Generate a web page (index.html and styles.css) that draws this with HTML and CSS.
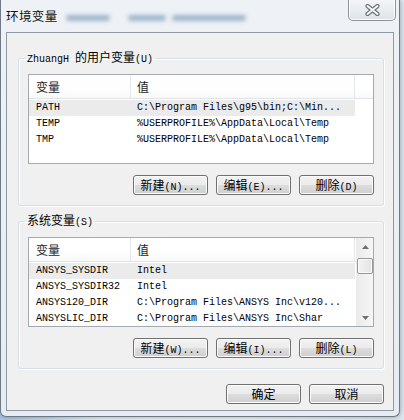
FILE: index.html
```html
<!DOCTYPE html>
<html lang="zh-CN">
<head>
  <meta charset="UTF-8">
  <title>环境变量</title>
  <link rel="stylesheet" href="styles.css">
</head>
<body>
  <div class="window">
    <!-- title bar -->
    <div class="titlebar">
      <div class="title">环境变量</div>
      <div class="title-blur"><i class="b1"></i><i class="b2"></i><i class="b3"></i></div>
      <div class="close">
        <svg width="15" height="12" viewBox="0 0 15 12">
          <path d="M2.5 2 L12.5 10 M12.5 2 L2.5 10" stroke="#6a7079" stroke-width="4.2" stroke-linecap="round"/>
          <path d="M2.5 2 L12.5 10 M12.5 2 L2.5 10" stroke="#f6f7f8" stroke-width="2" stroke-linecap="round"/>
        </svg>
      </div>
    </div>

    <div class="client">
      <!-- user variables -->
      <fieldset class="group">
        <legend><span class="lat">ZhuangH </span>的用户变量<span class="lat">(U)</span></legend>
        <div class="list">
          <div class="list-main">
            <div class="list-head"><div class="c1">变量</div><div class="c2">值</div></div>
            <div class="rows">
              <div class="row sel"><div class="c1">PATH</div><div class="c2">C:\Program Files\g95\bin;C:\Min...</div></div>
              <div class="row"><div class="c1">TEMP</div><div class="c2">%USERPROFILE%\AppData\Local\Temp</div></div>
              <div class="row"><div class="c1">TMP</div><div class="c2">%USERPROFILE%\AppData\Local\Temp</div></div>
            </div>
          </div>
        </div>
        <div class="btn-row">
          <button class="btn">新建<span class="lat">(N)...</span></button>
          <button class="btn">编辑<span class="lat">(E)...</span></button>
          <button class="btn">删除<span class="lat">(D)</span></button>
        </div>
      </fieldset>

      <!-- system variables -->
      <fieldset class="group group-sys">
        <legend>系统变量<span class="lat">(S)</span></legend>
        <div class="list">
          <div class="list-main">
            <div class="list-head"><div class="c1">变量</div><div class="c2">值</div></div>
            <div class="rows">
              <div class="row sel"><div class="c1">ANSYS_SYSDIR</div><div class="c2">Intel</div></div>
              <div class="row"><div class="c1">ANSYS_SYSDIR32</div><div class="c2">Intel</div></div>
              <div class="row"><div class="c1">ANSYS120_DIR</div><div class="c2">C:\Program Files\ANSYS Inc\v120...</div></div>
              <div class="row"><div class="c1">ANSYSLIC_DIR</div><div class="c2">C:\Program Files\ANSYS Inc\Shar</div></div>
            </div>
          </div>
          <div class="scroll">
            <div class="sb-btn">
              <svg width="7" height="4" viewBox="0 0 7 4"><path d="M0 4 L3.5 0 L7 4 Z" fill="#6f6f6f"/></svg>
            </div>
            <div class="sb-thumb"></div>
            <div class="sb-track"></div>
            <div class="sb-btn">
              <svg width="7" height="4" viewBox="0 0 7 4"><path d="M0 0 L3.5 4 L7 0 Z" fill="#6f6f6f"/></svg>
            </div>
          </div>
        </div>
        <div class="btn-row">
          <button class="btn">新建<span class="lat">(W)...</span></button>
          <button class="btn">编辑<span class="lat">(I)...</span></button>
          <button class="btn">删除<span class="lat">(L)</span></button>
        </div>
      </fieldset>

      <div class="btn-row dlg-row">
        <button class="btn">确定</button>
        <button class="btn">取消</button>
      </div>
    </div>
  </div>
</body>
</html>
```

FILE: styles.css
```css
* {
  box-sizing: border-box;
}
body {
  margin: 0;
  width: 404px;
  height: 420px;
  overflow: hidden;
  background: linear-gradient(90deg, #a9c8e6 0%, #e9f0f6 25%, #f1f4f7 60%, #dde6ee 100%);
  font-family: "Noto Sans CJK SC", sans-serif;
  font-size: 12px;
  color: #000;
}
.window {
  width: 400px;
  height: 417px;
  background: linear-gradient(#eef2f6, #e6ecf1);
  border: 1px solid #6f7984;
  border-top: none;
  border-radius: 0 0 6px 6px;
  padding: 0 5px 5px;
  box-shadow: 0 0 5px rgba(0, 0, 0, 0.35);
  display: flex;
  flex-direction: column;
}
.titlebar {
  height: 32px;
  flex-shrink: 0;
  display: flex;
  align-items: flex-start;
}
.title {
  padding-top: 7px;
  line-height: 18px;
  font-size: 12.5px;
  letter-spacing: 0.4px;
  color: #111;
}
.title-blur {
  display: flex;
  padding-top: 15px;
  margin-left: 8px;
}
.title-blur i {
  display: block;
  height: 6px;
  border-radius: 3px;
  background: #9fb4c9;
  filter: blur(2px);
}
.title-blur .b1 { width: 44px; }
.title-blur .b2 { width: 38px; margin-left: 18px; }
.title-blur .b3 { width: 74px; margin-left: 6px; }
.close {
  margin-left: auto;
  margin-right: -2px;
  margin-top: -1px;
  width: 48px;
  height: 22px;
  border: 1px solid #8e959d;
  border-top: none;
  border-radius: 0 0 5px 5px;
  background: linear-gradient(#f4f6f8, #dfe3e8);
  box-shadow: inset 0 0 0 1px rgba(255, 255, 255, 0.8);
  display: flex;
  align-items: center;
  justify-content: center;
}

.client {
  flex: 1;
  border: 1px solid #8e99a4;
  background: #f0f0f0;
  padding: 17px 9px 0 11px;
}

/* group boxes */
.group {
  margin: 0;
  padding: 0 9px 10px 9px;
  border: 1px solid #d5dfe5;
  border-radius: 3px;
  box-shadow: inset 1px 1px 0 #fff, 1px 1px 0 #fff;
}
.group-sys {
  margin-top: 7px;
}
.group legend {
  padding: 0 2px;
  margin-left: -3px;
  line-height: 14px;
  color: #000;
}
.lat {
  font-family: "Liberation Mono", monospace;
  font-size: 10px;
}

/* list views */
.list {
  margin-top: 7px;
  height: 90px;
  border: 1px solid #a4aab2;
  background: #fff;
  display: flex;
  overflow: hidden;
}
.list-main {
  flex: 1;
  min-width: 0;
}
.list-head {
  display: flex;
  height: 24px;
  border-bottom: 1px solid #e1e3e6;
  background: linear-gradient(#ffffff 0%, #ffffff 55%, #f8f9fa 100%);
}
.list-head .c1,
.list-head .c2 {
  border-right: 1px solid #e6e7e9;
  line-height: 23px;
  color: #1e1e1e;
}
.rows {
  padding-top: 1px;
}
.row {
  display: flex;
  width: 326px;
  height: 16px;
  line-height: 16px;
  font-family: "Liberation Mono", monospace;
  font-size: 10px;
  color: #000;
}
.row.sel {
  background: #ebebeb;
}
.c1 {
  width: 102px;
  padding-left: 7px;
  flex-shrink: 0;
  white-space: nowrap;
  overflow: hidden;
}
.c2 {
  width: 224px;
  padding-left: 6px;
  flex-shrink: 0;
  white-space: nowrap;
  overflow: hidden;
}

/* scroll bar */
.scroll {
  width: 17px;
  flex-shrink: 0;
  border-left: 1px solid #ececec;
  background: linear-gradient(90deg, #ebebeb, #f6f6f6);
  display: flex;
  flex-direction: column;
}
.sb-btn {
  height: 17px;
  display: flex;
  align-items: center;
  justify-content: center;
}
.sb-thumb {
  margin: 3px 0 0 0;
  height: 16px;
  border: 1px solid #979797;
  border-radius: 2px;
  background: linear-gradient(90deg, #f3f3f3, #e3e3e3);
  box-shadow: inset 0 0 0 1px #fbfbfb;
}
.sb-track {
  flex: 1;
}

/* buttons */
.btn-row {
  display: flex;
  justify-content: flex-end;
  gap: 8px;
  margin-top: 11px;
}
.dlg-row {
  margin-top: 15px;
}
.btn {
  width: 75px;
  height: 20px;
  padding: 0;
  border: 1px solid #707070;
  border-radius: 3px;
  background: linear-gradient(#f2f2f2 0%, #ebebeb 50%, #dddddd 51%, #cfcfcf 100%);
  box-shadow: inset 0 0 0 1px #fcfcfc;
  font-family: "Noto Sans CJK SC", sans-serif;
  font-size: 12px;
  line-height: 18px;
  color: #000;
}
```
